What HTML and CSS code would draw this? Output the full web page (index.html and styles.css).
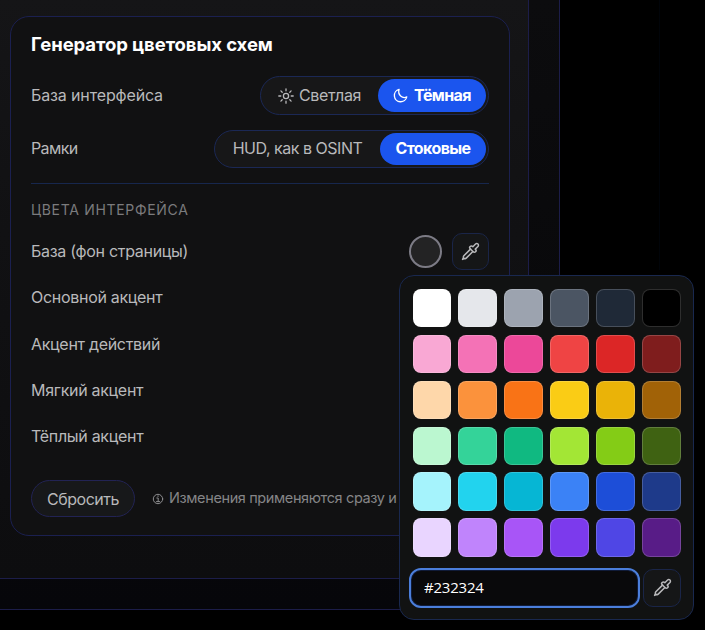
FILE: index.html
```html
<!DOCTYPE html>
<html lang="ru">
<head>
<meta charset="utf-8">
<title>Генератор цветовых схем</title>
<link rel="stylesheet" href="styles.css">
</head>
<body>
<svg class="defs" width="0" height="0">
  <symbol id="pipette" viewBox="0 0 24 24">
    <path d="m12 9-8.400 8.400A2 2 0 0 0 3 18.800V20l-1 2 2-1h1.200a2 2 0 0 0 1.400-.6L15 12"/>
    <path d="m18 9 .4.4a1 1 0 1 1-3 3l-3.800-3.800a1 1 0 1 1 3-3l.4.4 3.400-3.400a1 1 0 1 1 3 3z"/>
  </symbol>
</svg>
<div class="dialog">
  <div class="panel">
    <section class="card">
      <h2 class="title">Генератор цветовых схем</h2>
      <div class="row row-base">
        <span class="name n-iface">База интерфейса</span>
        <div class="segment seg-theme">
          <button class="option light">
            <svg class="icon sun" viewBox="0 0 16 16"><circle cx="8" cy="8" r="2.600"/><path d="M8 .8v2M8 13.200v2M.8 8h2M13.200 8h2M2.900 2.900l1.300 1.300M11.800 11.800l1.300 1.300M2.900 13.100l1.300-1.300M11.800 4.200l1.300-1.300"/></svg>
            <span>Светлая</span>
          </button>
          <button class="option active dark">
            <svg class="icon moon" viewBox="0 0 16 16"><path d="M6.500 1.500A6.700 6.700 0 1 0 14.700 9.500C10 11.900 4.600 7 6.500 1.500z"/></svg>
            <span>Тёмная</span>
          </button>
        </div>
      </div>
      <div class="row row-frames">
        <span class="name n-frames">Рамки</span>
        <div class="segment seg-frames">
          <button class="option hud"><span>HUD, как в OSINT</span></button>
          <button class="option active stock"><span>Стоковые</span></button>
        </div>
      </div>
      <div class="group">
        <h3 class="caption">ЦВЕТА ИНТЕРФЕЙСА</h3>
        <div class="color-row">
          <span class="name">База (фон страницы)</span>
          <div class="controls">
            <span class="dot"></span>
            <button class="pick"><svg class="icon pipette"><use href="#pipette"/></svg></button>
          </div>
        </div>
        <div class="color-row"><span class="name">Основной акцент</span></div>
        <div class="color-row"><span class="name">Акцент действий</span></div>
        <div class="color-row"><span class="name">Мягкий акцент</span></div>
        <div class="color-row"><span class="name">Тёплый акцент</span></div>
      </div>
      <div class="footer">
        <button class="reset">Сбросить</button>
        <svg class="icon info" viewBox="0 0 12 12"><circle cx="6" cy="6" r="4.700"/><path d="M4.800 5h1.400v3.600M4.500 8.600h3.200M5.700 3.100h.7"/></svg>
        <span class="note">Изменения применяются сразу и</span>
      </div>
    </section>
  </div>
</div>
<div class="popover">
  <div class="swatches">
    <i class="white"></i><i class="gray-200"></i><i class="gray-400"></i><i class="gray-600"></i><i class="gray-800"></i><i class="black"></i>
    <i class="pink-300"></i><i class="pink-400"></i><i class="pink-500"></i><i class="red-500"></i><i class="red-600"></i><i class="red-900"></i>
    <i class="orange-200"></i><i class="orange-400"></i><i class="orange-500"></i><i class="yellow-400"></i><i class="yellow-500"></i><i class="yellow-700"></i>
    <i class="green-200"></i><i class="emerald-400"></i><i class="emerald-500"></i><i class="lime-400"></i><i class="lime-500"></i><i class="lime-800"></i>
    <i class="cyan-200"></i><i class="cyan-400"></i><i class="cyan-500"></i><i class="blue-500"></i><i class="blue-700"></i><i class="blue-900"></i>
    <i class="purple-200"></i><i class="purple-400"></i><i class="purple-500"></i><i class="violet-600"></i><i class="indigo-600"></i><i class="purple-900"></i>
  </div>
  <div class="entry">
    <input class="hex" type="text" value="#232324" spellcheck="false">
    <button class="pick"><svg class="icon pipette"><use href="#pipette"/></svg></button>
  </div>
</div>
</body>
</html>
```

FILE: styles.css
```css
* { box-sizing: border-box; }
body {
  margin: 0;
  width: 705px;
  height: 630px;
  overflow: hidden;
  background: linear-gradient(#010409, #010409) 659px 0 / 1px 270px no-repeat, #000;
  color: #b9b9bb;
  font-family: Inter, sans-serif;
  font-size: 16px;
}
button { font: inherit; color: inherit; padding: 0; margin: 0; }
.defs { position: absolute; }
.icon { fill: none; stroke: currentColor; stroke-linecap: round; stroke-linejoin: round; flex: none; }

.dialog {
  width: 560px;
  height: 610px;
  border: solid #1c1d49;
  border-width: 0 1px 1px 0;
  background: linear-gradient(#0c0c0e, #09090b 50%, #06060a);
}
.panel {
  width: 529px;
  height: 579px;
  padding: 16px 0 0 10px;
  border: solid #1c1d49;
  border-width: 0 1px 1px 0;
  background: linear-gradient(#151517, #111113 40%, #0d0d0f);
}
.card {
  width: 500px;
  height: 520px;
  padding: 15px 20px 0;
  border: 1px solid #1b2050;
  border-radius: 19px;
  background: #111112;
}
.title {
  margin: 0 0 20px;
  line-height: 24px;
  font-size: 18.500px;
  font-weight: 700;
  color: #fff;
  letter-spacing: -.08px;
  white-space: nowrap;
}
.row { display: flex; align-items: center; justify-content: space-between; height: 39px; }
.row-frames { height: 38px; margin-top: 15px; }
.name { white-space: nowrap; line-height: 20px; letter-spacing: -.3px; }
.row .name { padding-bottom: 2px; }
.n-iface { letter-spacing: -.14px; }
.n-frames { letter-spacing: -.6px; }
.segment {
  display: flex;
  height: 100%;
  padding: 2px;
  border: 1px solid #1b2855;
  border-radius: 20px;
  background: #171718;
}
.seg-theme { width: 229px; }
.seg-frames { width: 275px; }
.option {
  display: flex;
  align-items: center;
  justify-content: center;
  border: 0;
  border-radius: 17px;
  background: none;
  white-space: nowrap;
  letter-spacing: -.5px;
}
.option span { padding-bottom: 1px; }
.seg-frames .option span { padding-bottom: 2px; }
.light { width: 115px; gap: 5px; padding-right: 2px; letter-spacing: -.35px; }
.dark { width: 108px; gap: 6px; letter-spacing: -.6px; }
.hud { width: 163px; padding-right: 2px; letter-spacing: -.48px; }
.stock { width: 106px; letter-spacing: -.6px; }
.active { background: #1b55ee; color: #fff; font-weight: 700; }
.sun { width: 16px; height: 16px; stroke-width: 1.300; }
.moon { width: 15px; height: 15px; stroke-width: 1.400; }

.group { margin-top: 15px; padding-top: 17px; border-top: 1px solid #17274d; }
.caption {
  margin: 0 0 10px;
  line-height: 17px;
  font-size: 14px;
  font-weight: 400;
  letter-spacing: .68px;
  color: #7b7b7d;
}
.color-row { display: flex; align-items: center; justify-content: space-between; height: 46.300px; }
.controls { display: flex; align-items: center; gap: 10px; }
.dot {
  width: 33px;
  height: 33px;
  border: 2px solid #7c7b85;
  border-radius: 50%;
  background: #232324;
}
.pick {
  display: flex;
  align-items: center;
  justify-content: center;
  width: 37px;
  height: 37px;
  border: 1px solid #1a2548;
  border-radius: 10px;
  background: #151617;
}
.pipette { width: 19px; height: 19px; stroke-width: 1.900; }
.footer { display: flex; align-items: center; margin-top: 21px; }
.reset {
  width: 104px;
  height: 37px;
  border: 1px solid #222354;
  border-radius: 19px;
  background: #17181a;
  letter-spacing: -.45px;
}
.info { width: 12px; height: 12px; margin-left: 17px; color: #8d8d8f; }
.note {
  margin-left: 5px;
  padding-bottom: 2px;
  font-size: 14.500px;
  letter-spacing: -.38px;
  color: #858587;
  white-space: nowrap;
}

.popover {
  position: absolute;
  left: 399px;
  top: 275px;
  width: 295px;
  height: 345px;
  padding: 13px;
  border: 1px solid #19284f;
  border-radius: 15px;
  background: #111212;
}
.swatches {
  display: grid;
  grid-template-columns: 38px repeat(5, 39px);
  grid-auto-rows: 38.400px;
  gap: 7.480px 7px;
}
.swatches i { border: 1px solid rgba(255, 255, 255, .18); border-radius: 8px; }
.entry { display: flex; align-items: center; gap: 3px; margin: 11px 0 0 -4px; width: 272px; }
.hex {
  width: 231px;
  height: 40px;
  padding: 0 12px 1px 13px;
  border: 2px solid #4b7edb;
  border-radius: 12px;
  outline: 0;
  box-shadow: inset 0 0 0 1px #101b38;
  background: #09090b;
  color: #fff;
  font: 500 15px "Open Sans", sans-serif;
  letter-spacing: -.2px;
}
.entry .pick { width: 38px; height: 38px; }

.white { background: #fff; }
.gray-200 { background: #e5e7eb; }
.gray-400 { background: #9ca3af; }
.gray-600 { background: #4b5563; }
.gray-800 { background: #1f2937; }
.black { background: #000; }
.pink-300 { background: #f9a8d4; }
.pink-400 { background: #f472b6; }
.pink-500 { background: #ec4899; }
.red-500 { background: #ef4444; }
.red-600 { background: #dc2626; }
.red-900 { background: #7f1d1d; }
.orange-200 { background: #fed7aa; }
.orange-400 { background: #fb923c; }
.orange-500 { background: #f97316; }
.yellow-400 { background: #facc15; }
.yellow-500 { background: #eab308; }
.yellow-700 { background: #a16207; }
.green-200 { background: #bbf7d0; }
.emerald-400 { background: #34d399; }
.emerald-500 { background: #10b981; }
.lime-400 { background: #a3e635; }
.lime-500 { background: #84cc16; }
.lime-800 { background: #3f6212; }
.cyan-200 { background: #a5f3fc; }
.cyan-400 { background: #22d3ee; }
.cyan-500 { background: #06b6d4; }
.blue-500 { background: #3b82f6; }
.blue-700 { background: #1d4ed8; }
.blue-900 { background: #1e3a8a; }
.purple-200 { background: #e9d5ff; }
.purple-400 { background: #c084fc; }
.purple-500 { background: #a855f7; }
.violet-600 { background: #7c3aed; }
.indigo-600 { background: #4f46e5; }
.purple-900 { background: #581c87; }
```
